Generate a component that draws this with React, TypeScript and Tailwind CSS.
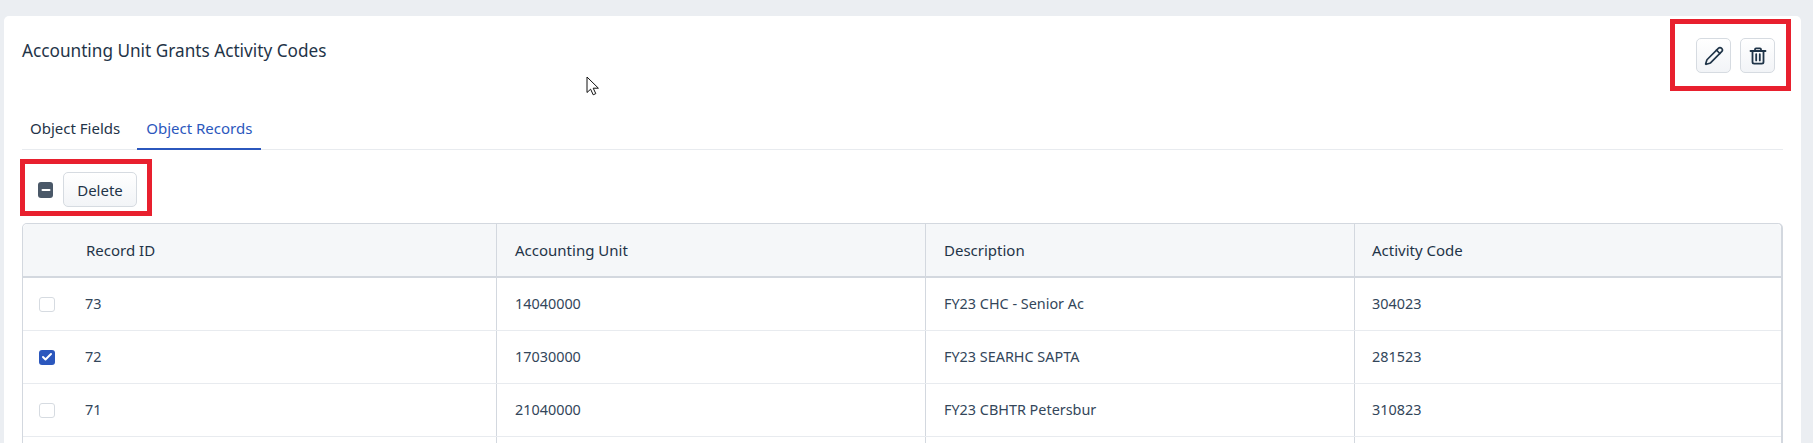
import { Check, Minus, Pencil } from "lucide-react";

const rows = [
  { id: "73", unit: "14040000", desc: "FY23 CHC - Senior Ac", code: "304023", checked: false },
  { id: "72", unit: "17030000", desc: "FY23 SEARHC SAPTA", code: "281523", checked: true },
  { id: "71", unit: "21040000", desc: "FY23 CBHTR Petersbur", code: "310823", checked: false },
];

const btn =
  "flex items-center justify-center rounded-[5px] border border-[#d6dbe1] bg-linear-to-b from-white to-[#f2f4f7] text-[#1f3448]";

function Row({ r }: { r: (typeof rows)[number] }) {
  return (
    <div className="grid h-[53px] grid-cols-[474px_429px_429px_1fr] border-b border-[#e8ebef] text-[14.4px] text-[#33465a]">
      <div className="flex items-center border-r border-[#d3d8df] pl-[16px]">
        {r.checked ? (
          <span className="flex h-[15px] w-[16px] items-center justify-center rounded-[3px] bg-[#2b57bd] text-white">
            <Check size={12} strokeWidth={4} />
          </span>
        ) : (
          <span className="h-[15px] w-[16px] rounded-[3px] border border-[#d6dbe1] bg-white" />
        )}
        <span className="ml-[30px]">{r.id}</span>
      </div>
      <div className="flex items-center border-r border-[#d3d8df] pl-[18px]">{r.unit}</div>
      <div className="flex items-center border-r border-[#d3d8df] pl-[18px]">{r.desc}</div>
      <div className="flex items-center pl-[17px]">{r.code}</div>
    </div>
  );
}

export default function App() {
  return (
    <div
      className="relative h-[443px] overflow-hidden bg-[#ebeef2] pt-[16px] pl-[4px] pr-[12px]"
      style={{ fontFamily: '"Noto Sans", "Open Sans", sans-serif' }}
    >
      <div className="h-[500px] rounded-[5px] bg-white">
        <div className="flex items-start justify-between pl-[18px] pr-[10px] pt-[3px]">
          <h1 className="mt-[20px] text-[17.2px] leading-[24px] font-[450] text-[#1f3448]">
            Accounting Unit Grants Activity Codes
          </h1>
          <div className="flex h-[72px] w-[121px] items-start justify-end gap-[9px] border-[5px] border-[#e8202e] pt-[14px] pr-[11px]">
            <button className={`${btn} h-[35px] w-[35px]`}>
              <Pencil size={20} strokeWidth={2} />
            </button>
            <button className={`${btn} h-[35px] w-[35px]`}>
              <svg width="20" height="20" viewBox="0 0 20 20" fill="none" stroke="currentColor" strokeWidth="1.8" strokeLinecap="round" strokeLinejoin="round">
                <path d="M2.5 5h15" />
                <path d="M7 5V3.4c0-.6.4-1 1-1h4c.6 0 1 .4 1 1V5" />
                <path d="M4.5 5v11c0 1 .6 1.6 1.6 1.6h7.8c1 0 1.6-.6 1.6-1.6V5" />
                <path d="M8.2 8.2v6.2M11.8 8.2v6.2" />
              </svg>
            </button>
          </div>
        </div>

        <div className="mx-[18px] mt-[17px] flex h-[42px] border-b border-[#e8ebef] text-[15px] font-[450]">
          <div className="flex items-center px-[8px] text-[#1f3448]">Object Fields</div>
          <div className="ml-[9px] -mb-px flex items-center border-b-2 border-[#2b57bd] px-[9px] text-[#2b57bd]">
            Object Records
          </div>
        </div>

        <div className="ml-[16px] mt-[9px] flex h-[57px] w-[132px] items-start gap-[10px] border-[5px] border-[#e8202e] pl-[13px] pt-[8px]">
          <span className="mt-[10px] flex h-[16px] w-[15px] items-center justify-center rounded-[3px] bg-[#4a5868] text-white">
            <Minus size={12} strokeWidth={4} />
          </span>
          <button className={`${btn} h-[35px] w-[74px] pt-[2px] text-[15px] font-[450]`}>Delete</button>
        </div>

        <div className="mx-[18px] mt-[7px] rounded-t-[5px] border border-r-2 border-[#d3d8df]">
          <div className="grid h-[54px] grid-cols-[474px_429px_429px_1fr] rounded-t-[5px] border-b-2 border-[#d3d8df] bg-[#f5f7f9] text-[15px] font-[450] text-[#1f3448]">
            <div className="flex items-center border-r border-[#d3d8df] pl-[63px]">Record ID</div>
            <div className="flex items-center border-r border-[#d3d8df] pl-[18px]">Accounting Unit</div>
            <div className="flex items-center border-r border-[#d3d8df] pl-[18px]">Description</div>
            <div className="flex items-center pl-[17px]">Activity Code</div>
          </div>
          {rows.map((r) => (
            <Row key={r.id} r={r} />
          ))}
          <div className="grid h-[53px] grid-cols-[474px_429px_429px_1fr]">
            <div className="border-r border-[#d3d8df]" />
            <div className="border-r border-[#d3d8df]" />
            <div className="border-r border-[#d3d8df]" />
            <div />
          </div>
        </div>
      </div>

      <svg className="absolute left-[586px] top-[76px]" width="14" height="20" viewBox="0 0 14 20" fill="none">
        <path
          d="M1 1v15.5l3.6-3.3 2.6 5.6 2.6-1.2-2.6-5.4h5.2z"
          fill="#fff"
          stroke="#111"
          strokeWidth="1"
          strokeLinejoin="miter"
        />
      </svg>
    </div>
  );
}
